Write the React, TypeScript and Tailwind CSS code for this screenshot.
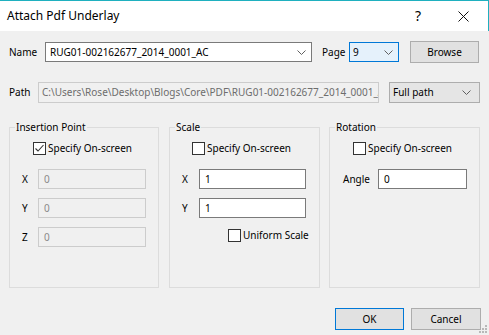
import React from "react";

const font = { fontFamily: '"Noto Sans", "Segoe UI", sans-serif' };

function Chevron({ color = "#606060" }: { color?: string }) {
  return (
    <svg width="9" height="5" viewBox="0 0 9 5" className="block">
      <path d="M0.5 0.5 L4.5 4.5 L8.5 0.5" fill="none" stroke={color} strokeWidth="1" />
    </svg>
  );
}

function CheckBox({ checked }: { checked?: boolean }) {
  return (
    <div className="w-[13px] h-[13px] border border-[#333333] bg-white flex items-center justify-center shrink-0">
      {checked && (
        <svg width="11" height="11" viewBox="0 0 11 11" className="block">
          <path d="M1.5 5.5 L4 8 L9.5 2" fill="none" stroke="#333333" strokeWidth="1.1" />
        </svg>
      )}
    </div>
  );
}

function Field({ value, disabled, w }: { value: string; disabled?: boolean; w: string }) {
  return (
    <div
      className={
        "h-[20px] flex items-center pl-[5px] " +
        w +
        (disabled
          ? " border border-[#cccccc] bg-[#f0f0f0] text-[#8a8a8a]"
          : " border border-[#7a7a7a] bg-white text-black")
      }
    >
      {value}
    </div>
  );
}

function Group({ title, children, w }: { title: string; children: React.ReactNode; w: string }) {
  return (
    <div className={"relative h-[161px] border border-[#dcdcdc] " + w}>
      <div className="absolute left-[5px] top-[-8px] bg-[#f0f0f0] px-[1px] leading-[14px]">{title}</div>
      {children}
    </div>
  );
}

export default function App() {
  return (
    <div
      className="relative w-[489px] h-[335px] bg-[#f0f0f0] flex flex-col overflow-hidden text-[10px] text-black"
      style={font}
    >
      {/* title bar */}
      <div className="h-[31px] bg-white border-t border-r border-[#1fb0bf] flex items-center relative">
        <div className="pl-[7px] text-[12px] leading-none">Attach Pdf Underlay</div>
        <div className="absolute left-[415px] top-[6px] text-[14px] leading-[18px]">?</div>
        <svg width="11" height="11" viewBox="0 0 11 11" className="absolute left-[458px] top-[10px]">
          <path d="M0.5 0.5 L10.5 10.5 M10.5 0.5 L0.5 10.5" stroke="#111" strokeWidth="1" />
        </svg>
      </div>

      {/* Name row */}
      <div className="mt-[10px] h-[22px] flex items-center pl-[9px]">
        <div className="w-[36px]">Name</div>
        <div className="w-[267px] h-[20px] border border-[#7a7a7a] bg-white flex items-center justify-between pl-[4px] pr-[5px]">
          <span>RUG01-002162677_2014_0001_AC</span>
          <Chevron />
        </div>
        <div className="ml-[10px] w-[27px]">Page</div>
        <div className="w-[50px] h-[20px] border border-[#0078d7] bg-[#e5f1fb] flex items-center justify-between pl-[3px] pr-[5px]">
          <span>9</span>
          <Chevron />
        </div>
        <div className="ml-[11px] w-[69px] h-[22px] border border-[#adadad] bg-[#e1e1e1] flex items-center justify-center">
          Browse
        </div>
      </div>

      {/* Path row */}
      <div className="mt-[19px] h-[21px] flex items-center pl-[9px]">
        <div className="w-[29px]">Path</div>
        <div className="w-[341px] h-[21px] border border-[#cccccc] bg-[#f0f0f0] text-[#6d6d6d] flex items-center pl-[3px] overflow-hidden whitespace-nowrap">
          <span>C:\Users\Rose\Desktop\Blogs\Core\PDF\RUG01-002162677_2014_0001_A</span>
        </div>
        <div className="ml-[10px] w-[91px] h-[21px] border border-[#adadad] bg-[#e5e5e5] flex items-center justify-between pl-[3px] pr-[8px]">
          <span>Full path</span>
          <Chevron />
        </div>
      </div>

      {/* Groups */}
      <div className="mt-[24px] flex pl-[9px]">
        <Group title="Insertion Point" w="w-[150px]">
          <div className="pt-[14px] pl-[23px] flex items-center gap-[2px] h-[27px]">
            <CheckBox checked />
            <span>Specify On-screen</span>
          </div>
          <div className="mt-[14px] flex flex-col gap-[9px]">
            {["X", "Y", "Z"].map((l) => (
              <div key={l} className="flex items-center pl-[12px]">
                <div className="w-[16px]">{l}</div>
                <Field value="0" disabled w="w-[108px]" />
              </div>
            ))}
          </div>
        </Group>
        <div className="w-[10px]" />
        <Group title="Scale" w="w-[151px]">
          <div className="pt-[14px] pl-[22px] flex items-center gap-[2px] h-[27px]">
            <CheckBox />
            <span>Specify On-screen</span>
          </div>
          <div className="mt-[14px] flex flex-col gap-[9px]">
            {["X", "Y"].map((l) => (
              <div key={l} className="flex items-center pl-[12px]">
                <div className="w-[17px]">{l}</div>
                <Field value="1" w="w-[107px]" />
              </div>
            ))}
          </div>
          <div className="mt-[10px] pl-[58px] flex items-center gap-[2px]">
            <CheckBox />
            <span>Uniform Scale</span>
          </div>
        </Group>
        <div className="w-[9px]" />
        <Group title="Rotation" w="w-[151px]">
          <div className="pt-[14px] pl-[23px] flex items-center gap-[2px] h-[27px]">
            <CheckBox />
            <span>Specify On-screen</span>
          </div>
          <div className="mt-[14px] flex items-center pl-[13px]">
            <div className="w-[35px]">Angle</div>
            <Field value="0" w="w-[89px]" />
          </div>
        </Group>
      </div>

      {/* Buttons */}
      <div className="mt-[20px] flex pl-[335px] gap-[7px]">
        <div className="w-[69px] h-[22px] border border-[#0078d7] bg-[#e1e1e1] flex items-center justify-center">
          OK
        </div>
        <div className="w-[70px] h-[22px] border border-[#adadad] bg-[#e1e1e1] flex items-center justify-center">
          Cancel
        </div>
      </div>

      {/* size grip */}
      <svg width="10" height="10" viewBox="0 0 10 10" className="absolute right-[1px] bottom-[1px]">
        {[
          [7, 1],
          [4, 4],
          [7, 4],
          [1, 7],
          [4, 7],
          [7, 7],
        ].map(([x, y], i) => (
          <rect key={i} x={x} y={y} width="2" height="2" fill="#b8b8b8" />
        ))}
      </svg>
    </div>
  );
}
